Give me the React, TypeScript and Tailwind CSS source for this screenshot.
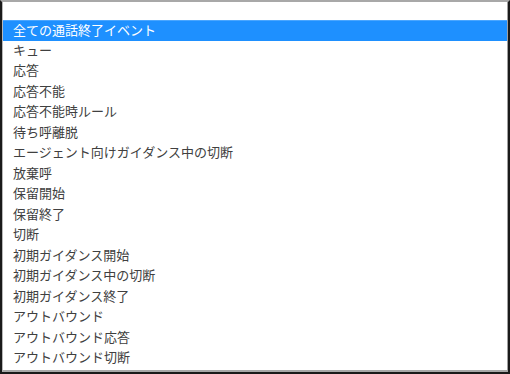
import React from "react";

const items = [
  "全ての通話終了イベント",
  "キュー",
  "応答",
  "応答不能",
  "応答不能時ルール",
  "待ち呼離脱",
  "エージェント向けガイダンス中の切断",
  "放棄呼",
  "保留開始",
  "保留終了",
  "切断",
  "初期ガイダンス開始",
  "初期ガイダンス中の切断",
  "初期ガイダンス終了",
  "アウトバウンド",
  "アウトバウンド応答",
  "アウトバウンド切断",
];

export default function App() {
  return (
    <div className="w-[510px] h-[374px] bg-white border-t-2 border-t-[#a8a8a8] border-l-2 border-l-[#1a1a1a] border-r-2 border-r-[#1a1a1a] border-b-2 border-b-[#1a1a1a] overflow-hidden">
      <div
        className="h-full border-l border-l-[#b8b8b8] border-r border-r-[#a0a0a0] border-b-2 border-b-[#a8a8a8] overflow-hidden"
        style={{ fontFamily: '"Noto Sans CJK JP", "Noto Sans", sans-serif' }}
      >
        <div className="h-[18px]" />
        {items.map((t, i) => (
          <div
            key={i}
            className={
              i === 0
                ? "h-[20.5px] flex items-center pl-[10px] pb-[3px] text-[13px] leading-none text-white bg-[#1e90ff] border-t border-t-[#4aa6ff]"
                : "h-[20.5px] flex items-center pl-[10px] pb-[3px] text-[13px] leading-none text-[#404040]"
            }
          >
            {t}
          </div>
        ))}
      </div>
    </div>
  );
}
